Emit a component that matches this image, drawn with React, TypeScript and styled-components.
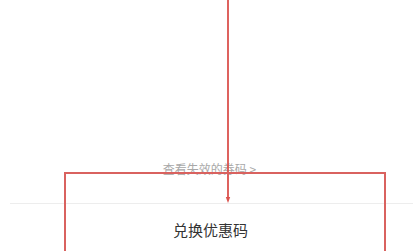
import React from 'react';
import styled, { createGlobalStyle } from "styled-components";

const GlobalStyle = createGlobalStyle`
  html, body {
    margin: 0;
    padding: 0;
    background: #fff;
  }
  body {
    font-family: "Noto Sans CJK SC", "Noto Sans", sans-serif;
    width: 419px;
    height: 251px;
    overflow: hidden;
  }
`;

const App = () => {
  return (
    <Page>
      <GlobalStyle/>
      <Content>
        <ExpiredLink>查看失效的券码 &gt;</ExpiredLink>
        <Divider/>
        <RedeemButton>兑换优惠码</RedeemButton>
      </Content>

      {/* annotation overlay */}
      <Arrow width="12" height="204" viewBox="0 0 12 204">
        <line x1="6" y1="0" x2="6" y2="200" stroke="#db524d" strokeWidth="1.8"/>
        <path d="M3.8 197 L6 203 L8.2 197 Z" fill="#db524d"/>
      </Arrow>
      <HighlightBox/>
    </Page>
  );
};

export default App;

const Page = styled.div`
  position: relative;
  width: 419px;
  height: 251px;
  overflow: hidden;
  background: #fff;
`;

const Content = styled.div`
  display: flex;
  flex-direction: column;
  align-items: center;
  padding-top: 160px;
`;

const ExpiredLink = styled.div`
  font-size: 12px;
  line-height: 18px;
  color: #a8a8a8;
`;

const Divider = styled.div`
  align-self: stretch;
  height: 1px;
  margin: 25px 6px 0 10px;
  background: #ededed;
`;

const RedeemButton = styled.div`
  margin-top: 15px;
  font-size: 15px;
  line-height: 22px;
  color: #333;
  padding-left: 2px;
`;

const Arrow = styled.svg`
  position: absolute;
  left: 222px;
  top: 0;
`;

const HighlightBox = styled.div`
  position: absolute;
  left: 64px;
  top: 172px;
  width: 318px;
  height: 100px;
  border: 2px solid #d9625f;
`;
